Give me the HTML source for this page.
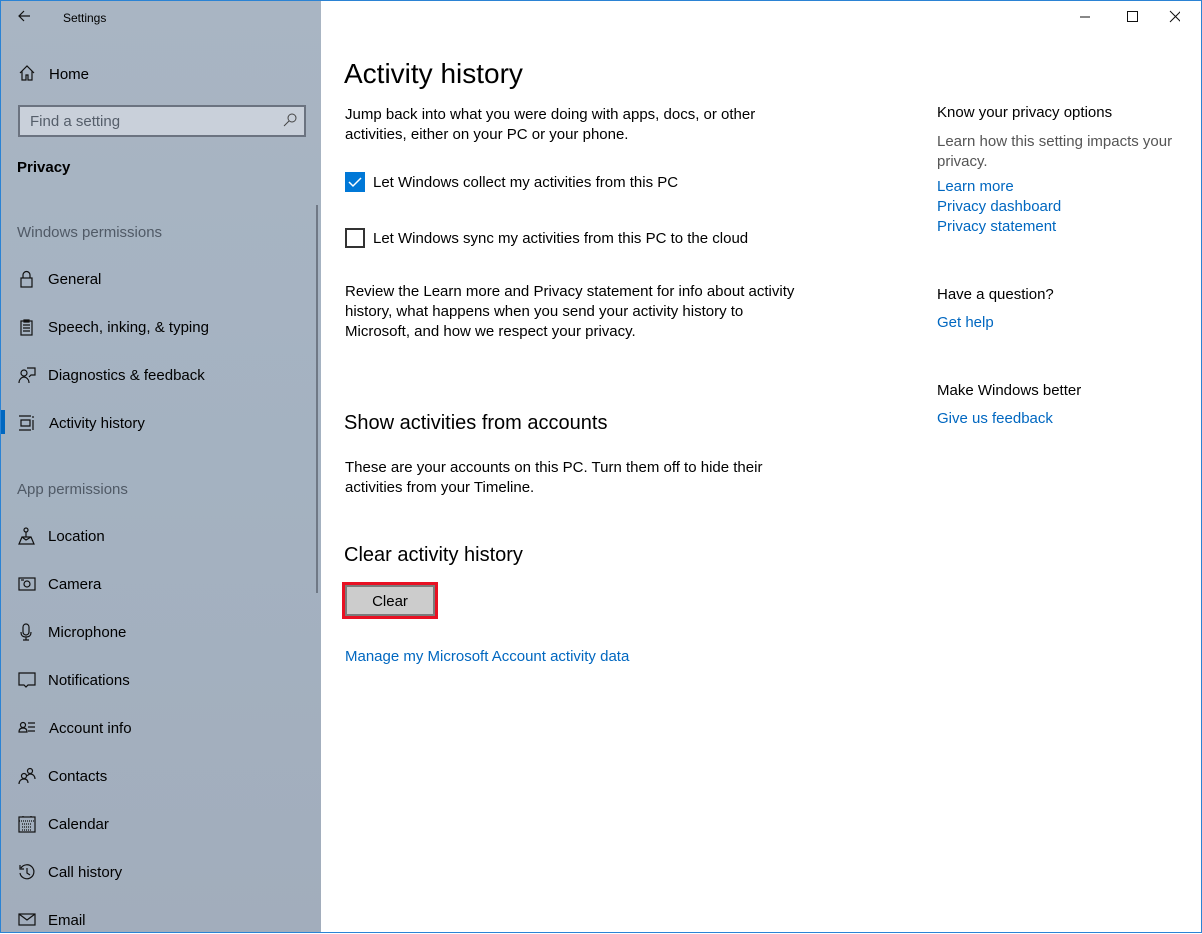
<!DOCTYPE html>
<html><head><style>
*{margin:0;padding:0;box-sizing:border-box}
body{width:1202px;height:933px;overflow:hidden;font-family:"Liberation Sans",sans-serif;background:#fff;position:relative;color:#000}
#win{position:absolute;left:0;top:0;width:1202px;height:933px;border:1px solid #2b83d4}
#side{position:absolute;left:1px;top:1px;width:320px;height:931px;background:linear-gradient(180deg,#a9b5c3 0%,#a4b2c1 50%,#a2adbc 100%)}
.t{position:absolute;white-space:nowrap;font-size:15px;margin-top:1px}
.ic{position:absolute;left:17px;width:18px;height:18px}
.ic svg{width:18px;height:18px;fill:none;stroke:#111;stroke-width:1.2}
.lnk{color:#0067c0}
.g{color:#505a66}
.r{color:#555}
</style></head><body>
<div id="side">
  <svg style="position:absolute;left:16px;top:8px" width="14" height="14" viewBox="0 0 14 14"><path d="M13 7H2M7 2L2 7l5 5" stroke="#111" stroke-width="1.2" fill="none"/></svg>
  <div class="t" style="left:62px;top:9px;font-size:12px">Settings</div>
  <div class="ic" style="top:63px"><svg viewBox="0 0 18 18"><path d="M2 9L9 2l7 7M4 7v9h4v-5h2v5h4V7"/></svg></div>
  <div class="t" style="left:48px;top:64px;font-size:15px">Home</div>
  <div style="position:absolute;left:17px;top:104px;width:288px;height:32px;border:2px solid #6b7380;background:#c9d0da"></div>
  <div class="t" style="left:29px;top:111px;color:#555e6a">Find a setting</div>
  <svg style="position:absolute;left:282px;top:112px" width="14" height="14" viewBox="0 0 14 14"><circle cx="9" cy="5" r="4" stroke="#444" fill="none"/><path d="M6 8L1 13" stroke="#444"/></svg>
  <div class="t" style="left:16px;top:157px;font-weight:bold">Privacy</div>
  <div style="position:absolute;left:315px;top:204px;width:2px;height:388px;background:#6f7885"></div>
  <div class="t g" style="left:16px;top:222px">Windows permissions</div>
  <div class="ic" style="top:269px"><svg viewBox="0 0 18 18"><rect x="3" y="8" width="11" height="9"/><path d="M5 8V5a3.5 3.5 0 017 0v3"/></svg></div>
  <div class="t" style="left:47px;top:269px">General</div>
  <div class="ic" style="top:317px"><svg viewBox="0 0 18 18"><rect x="3" y="3" width="11" height="14"/><path d="M6 2h5v2H6zM5 7h7M5 10h7M5 13h7"/></svg></div>
  <div class="t" style="left:47px;top:317px">Speech, inking, &amp; typing</div>
  <div class="ic" style="top:365px"><svg viewBox="0 0 18 18"><circle cx="6" cy="7" r="3"/><path d="M1 17c0-4 3-6 5-6s5 2 5 6M9 2h8v7h-4l-2 2"/></svg></div>
  <div class="t" style="left:47px;top:365px">Diagnostics &amp; feedback</div>
  <div style="position:absolute;left:0;top:409px;width:4px;height:24px;background:#0067c0"></div>
  <div class="ic" style="top:413px"><svg viewBox="0 0 18 18"><path d="M1 2h12M1 16h12M3 6h9v6H3zM15 2v2M15 6v10"/></svg></div>
  <div class="t" style="left:48px;top:413px">Activity history</div>
  <div class="t g" style="left:16px;top:479px">App permissions</div>
  <div class="ic" style="top:526px"><svg viewBox="0 0 18 18"><circle cx="8" cy="3" r="2"/><path d="M8 5v5M1 17l3-7h9l3 7zM4 10l4 3 5-3"/></svg></div>
  <div class="t" style="left:47px;top:526px">Location</div>
  <div class="ic" style="top:574px"><svg viewBox="0 0 18 18"><rect x="1" y="3" width="16" height="12"/><circle cx="9" cy="9" r="3"/><path d="M3 5h3"/></svg></div>
  <div class="t" style="left:47px;top:574px">Camera</div>
  <div class="ic" style="top:622px"><svg viewBox="0 0 18 18"><rect x="5" y="1" width="6" height="11" rx="3"/><path d="M3 9c0 4 2 5 5 5s5-1 5-5M8 14v3M5 17h6"/></svg></div>
  <div class="t" style="left:47px;top:622px">Microphone</div>
  <div class="ic" style="top:670px"><svg viewBox="0 0 18 18"><path d="M1 2h16v12H10l-2 2-2-2H1z"/></svg></div>
  <div class="t" style="left:47px;top:670px">Notifications</div>
  <div class="ic" style="top:718px"><svg viewBox="0 0 18 18"><circle cx="5" cy="6" r="2.5"/><path d="M1 13c0-3 2-4 4-4s4 1 4 4zM10 4h7M10 8h7M10 12h7"/></svg></div>
  <div class="t" style="left:48px;top:718px">Account info</div>
  <div class="ic" style="top:766px"><svg viewBox="0 0 18 18"><circle cx="6" cy="9" r="2.5"/><circle cx="12" cy="4" r="2.5"/><path d="M1 17c0-3 2-5 5-5s4 2 4 4M9 9c1-1 2-2 3-2 3 0 5 2 5 5"/></svg></div>
  <div class="t" style="left:47px;top:766px">Contacts</div>
  <div class="ic" style="top:814px"><svg viewBox="0 0 18 18"><rect x="1" y="2" width="16" height="15"/><path d="M1 6h16M5 1v2M13 1v2M4 9h10M4 12h10M4 15h10" stroke-dasharray="1 1"/></svg></div>
  <div class="t" style="left:47px;top:862px;">Call history</div>
  <div class="t" style="left:47px;top:814px">Calendar</div>
  <div class="ic" style="top:862px"><svg viewBox="0 0 18 18"><path d="M3 5a7 7 0 11-1 5M2 2v4h4M9 5v5l3 2"/></svg></div>
  <div class="ic" style="top:910px"><svg viewBox="0 0 18 18"><rect x="1" y="3" width="16" height="11"/><path d="M1 3l8 6 8-6"/></svg></div>
  <div class="t" style="left:47px;top:910px">Email</div>
</div>
<div id="win"></div>
<svg style="position:absolute;left:1080px;top:10px" width="100" height="14" viewBox="0 0 100 14" stroke="#111" fill="none"><path d="M0 7h10"/><rect x="47.5" y="1.5" width="10" height="10"/><path d="M90 1l11 11M101 1L90 12"/></svg>

<div class="t" style="left:344px;top:57px;font-size:28px">Activity history</div>
<div class="t" style="left:345px;top:104px;line-height:20px">Jump back into what you were doing with apps, docs, or other<br>activities, either on your PC or your phone.</div>
<div style="position:absolute;left:345px;top:172px;width:20px;height:20px;background:#0078d7"><svg width="20" height="20" viewBox="0 0 20 20"><path d="M4 10l4 4 8-8" stroke="#fff" stroke-width="1.5" fill="none"/></svg></div>
<div class="t" style="left:373px;top:173px">Let Windows collect my activities from this PC</div>
<div style="position:absolute;left:345px;top:228px;width:20px;height:20px;border:2px solid #333"></div>
<div class="t" style="left:373px;top:229px">Let Windows sync my activities from this PC to the cloud</div>
<div class="t" style="left:345px;top:281px;line-height:20px">Review the Learn more and Privacy statement for info about activity<br>history, what happens when you send your activity history to<br>Microsoft, and how we respect your privacy.</div>
<div class="t" style="left:344px;top:411px;font-size:20px">Show activities from accounts</div>
<div class="t" style="left:345px;top:457px;line-height:20px">These are your accounts on this PC. Turn them off to hide their<br>activities from your Timeline.</div>
<div class="t" style="left:344px;top:543px;font-size:20px">Clear activity history</div>
<div style="position:absolute;left:342px;top:582px;width:96px;height:37px;border:3px solid #e81123"><div style="width:100%;height:100%;border:2px solid #7a7a7a;background:#cccccc;text-align:center;line-height:29px;font-size:15px">Clear</div></div>
<div class="t lnk" style="left:345px;top:647px">Manage my Microsoft Account activity data</div>

<div class="t" style="left:937px;top:103px">Know your privacy options</div>
<div class="t r" style="left:937px;top:131px;line-height:20px">Learn how this setting impacts your<br>privacy.</div>
<div class="t lnk" style="left:937px;top:177px">Learn more</div>
<div class="t lnk" style="left:937px;top:197px">Privacy dashboard</div>
<div class="t lnk" style="left:937px;top:217px">Privacy statement</div>
<div class="t" style="left:937px;top:285px">Have a question?</div>
<div class="t lnk" style="left:937px;top:313px">Get help</div>
<div class="t" style="left:937px;top:381px">Make Windows better</div>
<div class="t lnk" style="left:937px;top:409px">Give us feedback</div>
</body></html>
